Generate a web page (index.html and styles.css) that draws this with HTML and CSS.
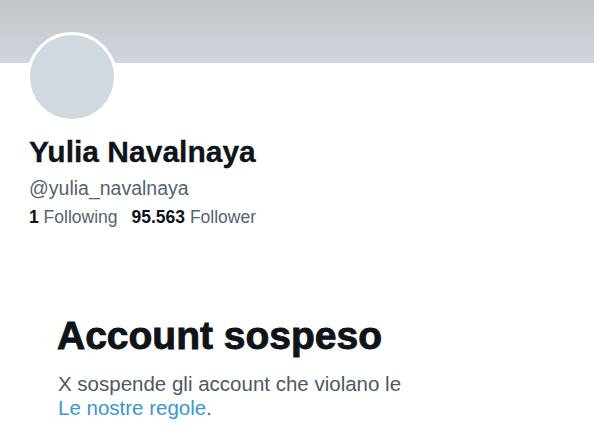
FILE: index.html
```html
<!DOCTYPE html>
<html lang="it">
<head>
<meta charset="utf-8">
<title>Yulia Navalnaya</title>
<link rel="stylesheet" href="styles.css">
</head>
<body>
<div class="banner"></div>
<section class="profile">
  <div class="avatar"></div>
  <h1 class="name">Yulia Navalnaya</h1>
  <div class="handle">@yulia_navalnaya</div>
  <div class="stats">
    <span class="stat"><b>1</b> Following</span>
    <span class="stat"><b>95.563</b> Follower</span>
  </div>
</section>
<section class="suspended">
  <h2 class="title">Account sospeso</h2>
  <p class="desc">X sospende gli account che violano le<br><a class="link" href="#">Le nostre regole</a>.</p>
</section>
</body>
</html>
```
FILE: styles.css
```css
html, body {
  margin: 0;
  padding: 0;
  background: #ffffff;
}
body {
  width: 594px;
  height: 444px;
  overflow: hidden;
  font-family: "Liberation Sans", Arial, sans-serif;
  color: #0f1419;
}
.banner {
  height: 63px;
  background: linear-gradient(to bottom, #c0c6c7 0%, #c7cdd1 45%, #cfd5db 100%);
}
.profile {
  padding-left: 27px;
}
.avatar {
  width: 84px;
  height: 84px;
  border-radius: 50%;
  border: 3px solid #ffffff;
  background: #d1d8de;
  margin-top: -31px;
}
.name {
  margin: 12px 0 0 2px;
  font-size: 30px;
  line-height: 36px;
  font-weight: 700;
  -webkit-text-stroke: 0.3px #0f1419;
}
.handle {
  margin: 6px 0 0 2px;
  font-size: 19.5px;
  line-height: 24px;
  color: #536471;
}
.stats {
  margin: 7px 0 0 2px;
  display: flex;
  gap: 14px;
  font-size: 17.5px;
  line-height: 20px;
  color: #536471;
}
.stat b {
  color: #0f1419;
  font-weight: 700;
}
.suspended {
  padding-left: 57px;
  margin-top: 86px;
}
.title {
  margin: 0;
  font-size: 39px;
  line-height: 46px;
  font-weight: 700;
  -webkit-text-stroke: 0.9px #0f1419;
}
.desc {
  margin: 13px 0 0 1px;
  font-size: 20.5px;
  line-height: 24px;
  color: #4e5963;
}
.link {
  color: #3a96d2;
  text-decoration: none;
}
```
